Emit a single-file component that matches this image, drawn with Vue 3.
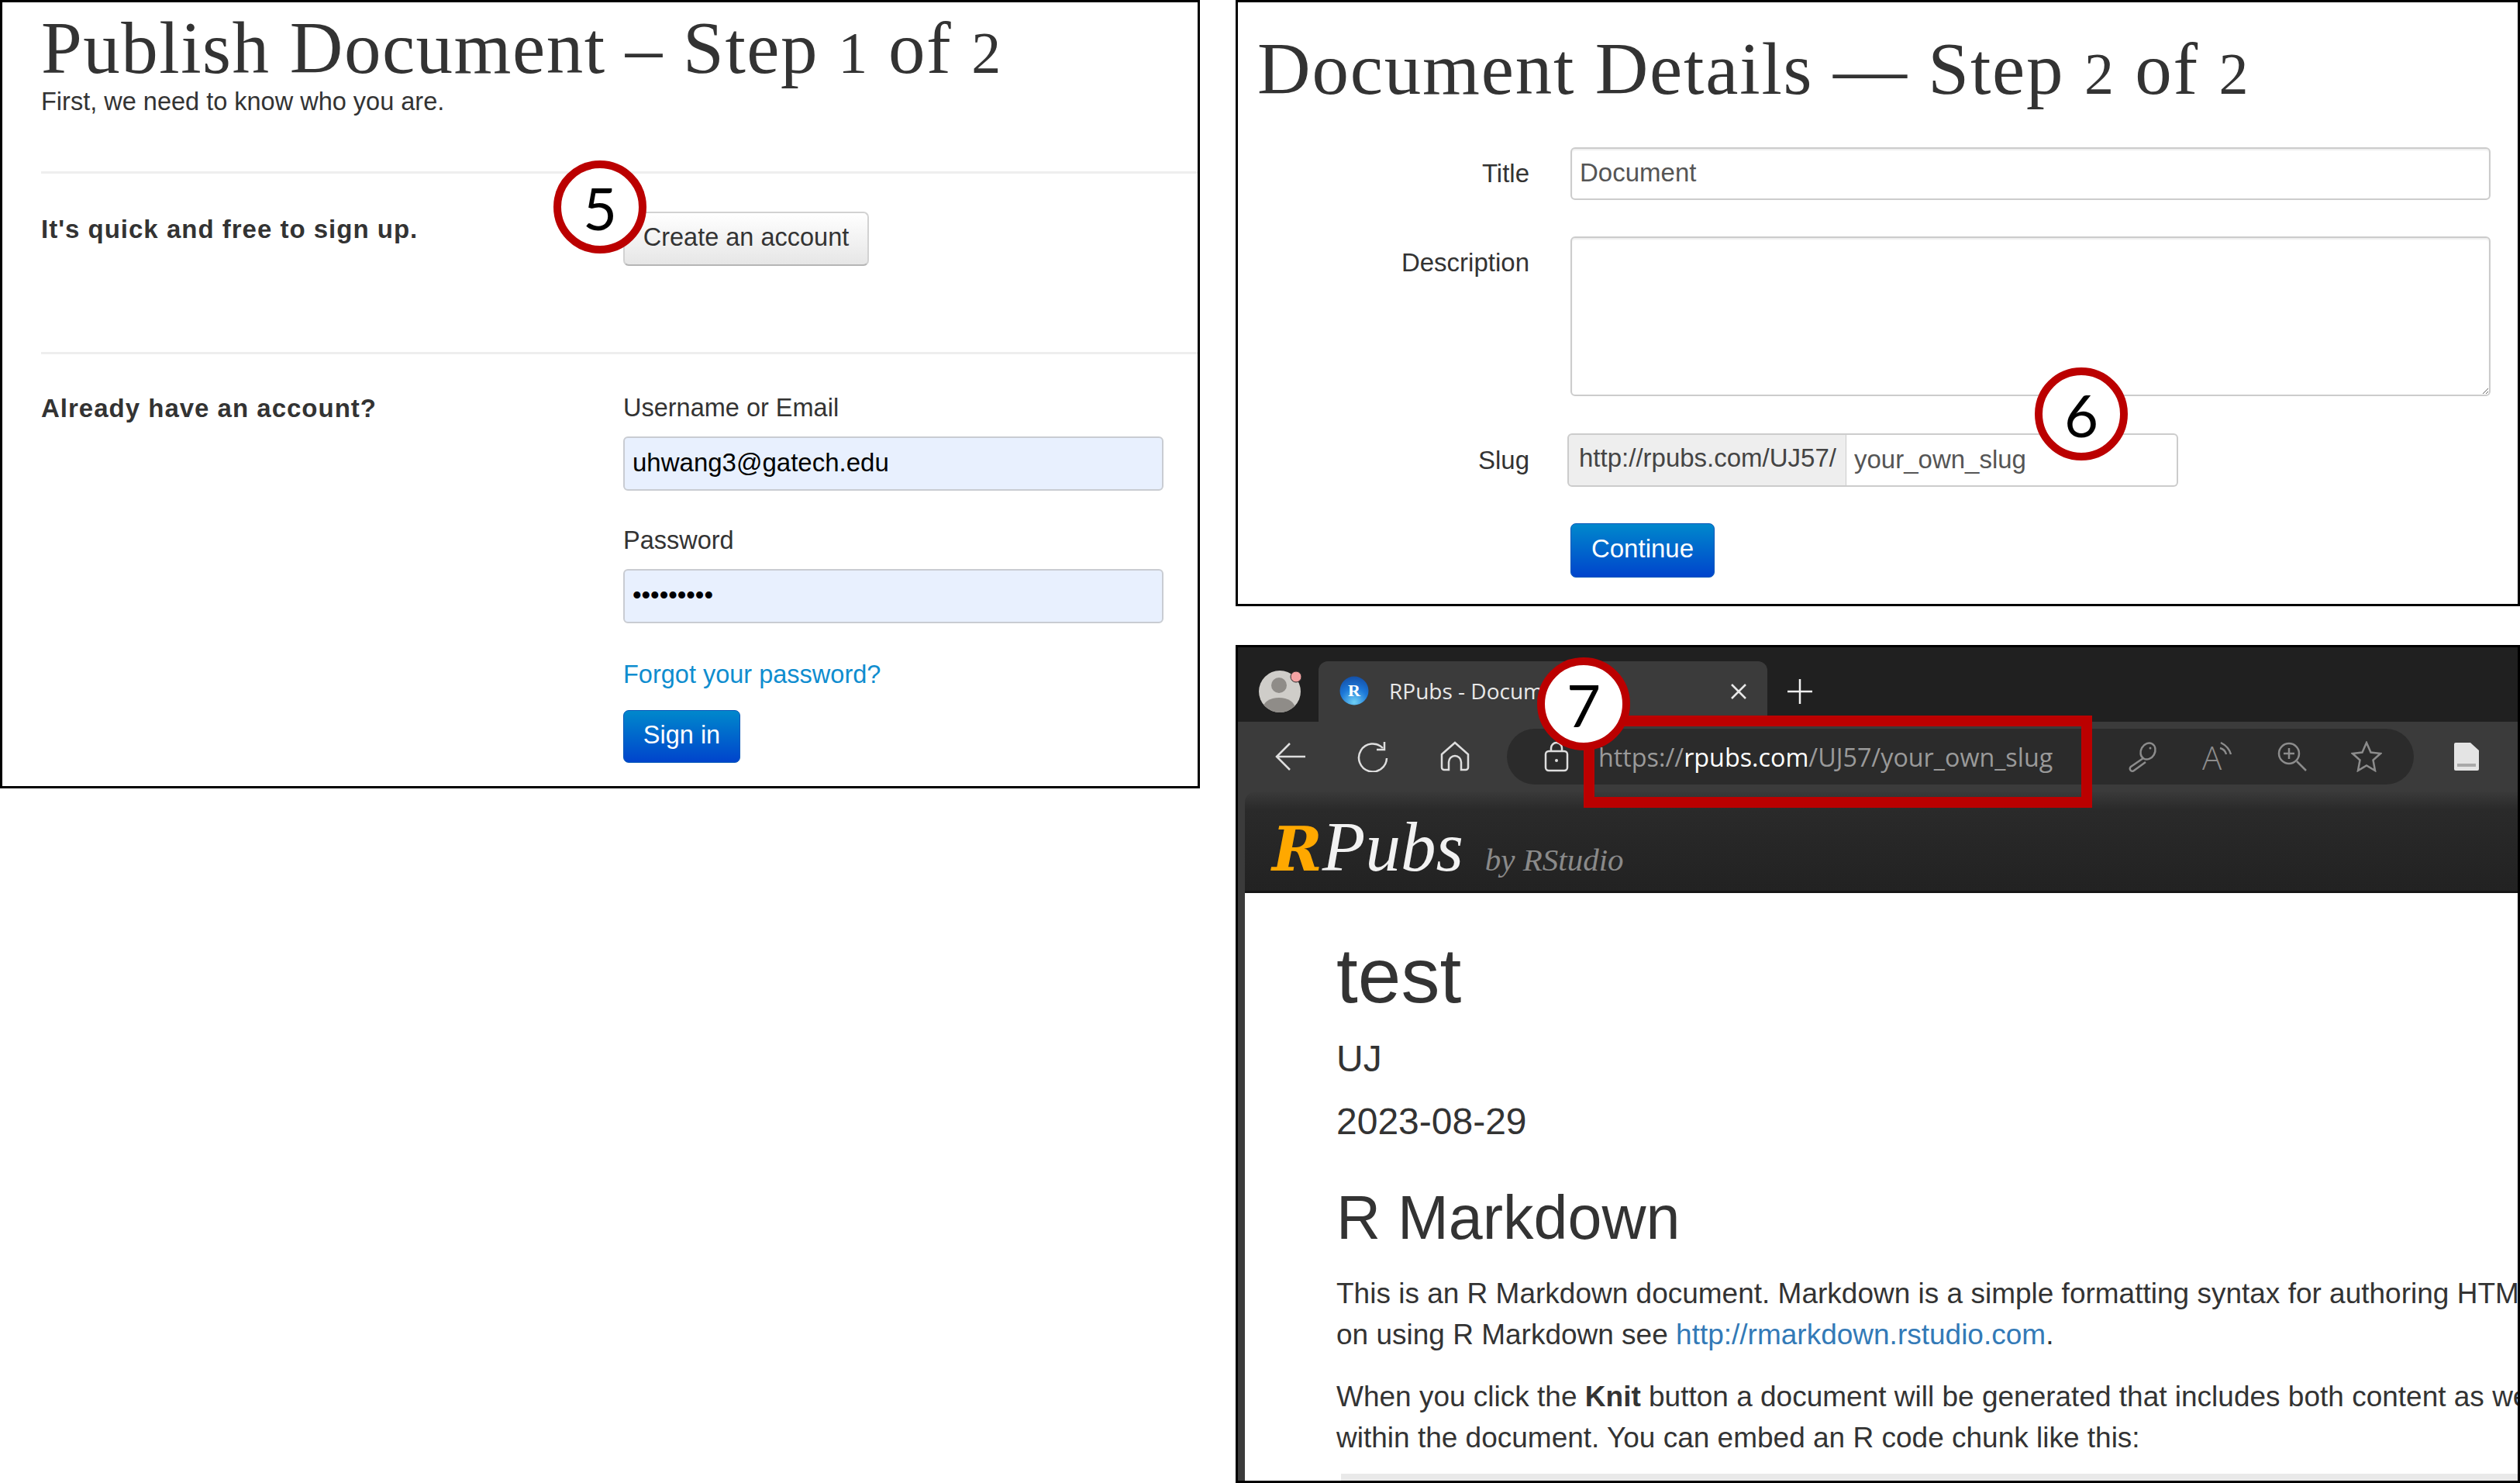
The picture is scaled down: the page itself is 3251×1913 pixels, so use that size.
<script setup>
import { reactive } from 'vue'

const login = reactive({ email: 'uhwang3@gatech.edu', password: 'secret123' })
const details = reactive({ title: 'Document', description: '', slug: 'your_own_slug' })
</script>

<template>
  <div class="sheet">
    <section class="panel publish">
      <h1 class="slab">Publish Document – Step <span class="num">1</span> of <span class="num">2</span></h1>
      <p class="lead">First, we need to know who you are.</p>

      <div class="row signup">
        <strong>It's quick and free to sign up.</strong>
        <div><button class="btn">Create an account</button></div>
      </div>

      <div class="row signin">
        <strong>Already have an account?</strong>
        <form class="login" @submit.prevent>
          <label for="email">Username or Email</label>
          <input id="email" v-model="login.email" class="filled" type="text" />
          <label for="pass" class="pass-label">Password</label>
          <input id="pass" v-model="login.password" class="filled pass" type="password" />
          <a class="forgot" href="#">Forgot your password?</a>
          <button class="btn primary">Sign in</button>
        </form>
      </div>
    </section>

    <div class="right">
      <section class="panel details">
        <h1 class="slab">Document Details — Step <span class="num">2</span> of <span class="num">2</span></h1>
        <form class="fields" @submit.prevent>
          <label for="title">Title</label>
          <input id="title" v-model="details.title" class="plain" type="text" />

          <label for="desc" class="desc-label">Description</label>
          <textarea id="desc" v-model="details.description" class="plain area"></textarea>

          <label for="slug">Slug</label>
          <div class="slug-group">
            <span class="addon">http://rpubs.com/UJ57/</span>
            <input id="slug" v-model="details.slug" class="slug" type="text" />
          </div>

          <span></span>
          <div><button class="btn primary continue">Continue</button></div>
        </form>
      </section>

      <section class="panel browser">
        <div class="tabstrip">
          <svg class="avatar" viewBox="0 0 56 56">
            <clipPath id="avatar-clip"><circle cx="28" cy="28" r="27" /></clipPath>
            <circle cx="28" cy="28" r="27" fill="#cfcdc9" />
            <g clip-path="url(#avatar-clip)" fill="#8f8c88">
              <circle cx="27" cy="20" r="10" />
              <ellipse cx="27" cy="50" rx="21" ry="14" />
            </g>
            <circle cx="49" cy="9" r="7" fill="#f4a3a3" stroke="#2a2a2a" stroke-width="1" />
          </svg>
          <div class="tab">
            <svg class="favicon" viewBox="0 0 38 38">
              <defs>
                <radialGradient id="fav" cx="50%" cy="90%" r="90%">
                  <stop offset="0" stop-color="#6fd0f5" />
                  <stop offset="0.55" stop-color="#1c78d8" />
                  <stop offset="1" stop-color="#1450a8" />
                </radialGradient>
              </defs>
              <circle cx="19" cy="19" r="18.5" fill="url(#fav)" />
              <text x="19" y="26" text-anchor="middle" class="fav-r">R</text>
            </svg>
            <span class="tab-title">RPubs - Document</span>
            <svg class="tab-close" viewBox="0 0 24 24">
              <path d="M3 3l18 18M21 3L3 21" />
            </svg>
          </div>
          <svg class="new-tab" viewBox="0 0 34 34"><path d="M17 1v32M1 17h32" /></svg>
        </div>

        <div class="toolbar">
          <svg class="tool" viewBox="0 0 40 40"><path d="M39 20H2M19 3L2 20l17 17" /></svg>
          <svg class="tool" viewBox="0 0 40 40">
            <path d="M33 9A18 18 0 1 0 38 22" />
            <path d="M35 1v10H25" />
          </svg>
          <svg class="tool" viewBox="0 0 40 40">
            <path d="M3 17L20 2l17 15v17a3 3 0 0 1-3 3h-6V27a8 8 0 0 0-16 0v10H6a3 3 0 0 1-3-3Z" />
          </svg>
          <div class="omnibox">
            <svg class="tool lock" viewBox="0 0 40 40">
              <rect x="6" y="13" width="28" height="25" rx="4" />
              <path d="M13 13V9a7 7 0 0 1 14 0v4" />
              <circle class="dot" cx="20" cy="25" r="2" />
            </svg>
            <span class="url"><span class="dim">https://</span>rpubs.com<span class="dim">/UJ57/your_own_slug</span></span>
            <svg class="tool muted push" viewBox="0 0 40 40">
              <ellipse cx="26" cy="13" rx="9" ry="11" transform="rotate(30 26 13)" />
              <circle class="dot" cx="29" cy="9" r="1.5" />
              <path d="M20 22L4 33a3 3 0 0 0 4 5l15-11" />
            </svg>
            <svg class="tool muted" viewBox="0 0 40 40">
              <text x="0" y="37" class="read-a">A</text>
              <path d="M24 2c6 3 11 8 13 15M23 9c4 1 7 4 8 8" />
            </svg>
            <svg class="tool muted" viewBox="0 0 40 40">
              <circle cx="16" cy="16" r="13" />
              <path d="M16 9v14M9 16h14M26 26l12 12" />
            </svg>
            <svg class="tool muted" viewBox="0 0 40 40">
              <path d="M20 2l5.5 12.5L38 16l-9.5 8.5L31 38l-11-6.500L9 38l2.500-13.500L2 16l12.500-1.500Z" />
            </svg>
          </div>
          <svg class="doc-icon" viewBox="0 0 34 38">
            <path d="M1 3a2 2 0 0 1 2-2h19l11 10v24a2 2 0 0 1-2 2H3a2 2 0 0 1-2-2Z" fill="#e4e4e4" />
            <rect x="5" y="28" width="24" height="4" fill="#a9a9a9" />
          </svg>
        </div>

        <div class="site">
          <header class="site-bar">
            <span class="brand"><b>R</b>Pubs</span>
            <span class="by">by RStudio</span>
          </header>
          <article class="doc">
            <h1>test</h1>
            <h4 class="author">UJ</h4>
            <h4 class="date">2023-08-29</h4>
            <h2>R Markdown</h2>
            <p>This is an R Markdown document. Markdown is a simple formatting syntax for authoring HTML, PDF,
              <br />on using R Markdown see <a href="#">http://rmarkdown.rstudio.com</a>.</p>
            <p class="last">When you click the <b>Knit</b> button a document will be generated that includes both content as well as
              <br />within the document. You can embed an R code chunk like this:</p>
            <div class="code"></div>
          </article>
        </div>
      </section>
    </div>

    <!-- callouts drawn on top of the screenshots -->
    <div class="callout c5">5</div>
    <div class="callout c6">6</div>
    <div class="url-box"></div>
    <div class="callout c7">7</div>
  </div>
</template>

<style>
html,
body {
  margin: 0;
  background: #fff;
  overflow: hidden;
}
</style>

<style scoped>
.sheet {
  position: relative;
  display: grid;
  grid-template-columns: 1548px 1657px;
  column-gap: 46px;
  align-items: start;
  width: 3251px;
  height: 1913px;
  background: #fff;
  color: #333;
  font-family: "Liberation Sans", Arial, sans-serif;
  font-size: 32.5px;
}

.panel {
  box-sizing: border-box;
  border: 3px solid #000;
  overflow: hidden;
}

.slab {
  margin: 0;
  font-family: "Liberation Serif", serif;
  font-weight: 400;
  font-size: 95px;
  line-height: 96px;
  letter-spacing: 1.5px;
  color: #333;
  white-space: nowrap;
}

.slab .num {
  font-size: 76px;
}

/* left: publish step 1 */
.publish {
  height: 1017px;
  padding-left: 50px;
}

.publish .slab {
  margin-top: 11px;
}

.lead {
  margin: -2px 0 0;
  line-height: 34px;
}

.row {
  display: grid;
  grid-template-columns: 751px 697px;
  border-top: 3px solid #eee;
}

.row strong {
  line-height: 42px;
  font-size: 33px;
  letter-spacing: 1px;
}

.signup {
  margin-top: 73px;
  height: 233px;
  padding-top: 49px;
  box-sizing: border-box;
}

.signup strong {
  padding-top: 2px;
}

.signin {
  padding-top: 49px;
}

.login {
  display: flex;
  flex-direction: column;
  align-items: flex-start;
}

.login label {
  line-height: 40px;
  margin-bottom: 17px;
}

.login .pass-label {
  margin-top: 44px;
  margin-bottom: 17px;
}

.filled {
  box-sizing: border-box;
  width: 697px;
  height: 70px;
  padding: 0 10px 2px;
  border: 2px solid #c9ccd2;
  border-radius: 6px;
  background: #e8f0fe;
  color: #000;
  font: 33px "Liberation Sans", Arial, sans-serif;
  outline: none;
}

.forgot {
  margin-top: 46px;
  color: #0f8dcf;
  line-height: 40px;
  text-decoration: none;
}

.btn {
  box-sizing: border-box;
  width: 317px;
  height: 70px;
  padding: 0 0 4px;
  border: 2px solid #d2d2d2;
  border-bottom-color: #b5b5b5;
  border-radius: 7px;
  background: linear-gradient(#ffffff, #e6e6e6);
  color: #333;
  font: 32.5px "Liberation Sans", Arial, sans-serif;
}

.btn.primary {
  border: 1px solid #0055b8;
  background: linear-gradient(#0088cc, #0044cc);
  color: #fff;
}

.login .primary {
  margin-top: 26px;
  width: 151px;
  height: 68px;
}

/* right: details step 2 */
.right {
  display: flex;
  flex-direction: column;
  gap: 50px;
}

.details {
  height: 782px;
  font-size: 33px;
}

.details .slab {
  margin: 38px 0 0 25px;
  letter-spacing: 1.8px;
}

.fields {
  display: grid;
  grid-template-columns: 376px 1187px;
  column-gap: 53px;
  margin-top: 47px;
}

.fields label {
  justify-self: end;
  line-height: 40px;
  align-self: center;
}

.fields .desc-label {
  align-self: start;
  padding-top: 61px;
}

.plain {
  box-sizing: border-box;
  width: 100%;
  height: 68px;
  padding: 0 10px 2px;
  border: 2px solid #ccc;
  border-radius: 6px;
  background: #fff;
  color: #555;
  font: 33px "Liberation Sans", Arial, sans-serif;
  box-shadow: inset 0 2px 2px rgba(0, 0, 0, 0.07);
  outline: none;
}

.area {
  display: block;
  height: 206px;
  margin: 47px 0 48px;
  padding: 8px 10px;
}

.slug-group {
  display: flex;
  margin-left: -4px;
  height: 69px;
}

.addon {
  box-sizing: border-box;
  width: 360px;
  padding-left: 13px;
  border: 2px solid #ccc;
  border-right-width: 1px;
  border-radius: 6px 0 0 6px;
  background: #eee;
  color: #444;
  line-height: 60px;
  white-space: nowrap;
  overflow: hidden;
}

.slug {
  box-sizing: border-box;
  width: 428px;
  padding: 0 10px 2px;
  border: 2px solid #ccc;
  border-left: 0;
  border-radius: 0 6px 6px 0;
  color: #555;
  font: 33px "Liberation Sans", Arial, sans-serif;
  outline: none;
}

.continue {
  margin-top: 47px;
  width: 186px;
  height: 70px;
  font-size: 33px;
}

/* right: browser shot */
.browser {
  display: flex;
  flex-direction: column;
  height: 1081px;
  background: #3b3b3b;
}

.tabstrip {
  display: flex;
  align-items: flex-end;
  flex: none;
  height: 96px;
  background: #202020;
}

.avatar {
  flex: none;
  width: 56px;
  height: 56px;
  margin: 0 22px 11px 26px;
}

.tab {
  display: flex;
  align-items: center;
  box-sizing: border-box;
  width: 579px;
  height: 78px;
  padding: 0 25px 0 27px;
  background: #3b3b3b;
  border-radius: 12px 12px 0 0;
}

.favicon {
  flex: none;
  width: 38px;
  height: 38px;
  margin-bottom: 2px;
}

.fav-r {
  font: 700 22px "Liberation Serif", serif;
  fill: #fff;
}

.tab-title {
  flex: 1;
  margin: 0 0 2px 26px;
  color: #e8e8e8;
  font: 28px "Open Sans", sans-serif;
  white-space: nowrap;
  overflow: hidden;
}

.tab-close {
  flex: none;
  width: 24px;
  height: 24px;
  fill: none;
  stroke: #e8e8e8;
  stroke-width: 2.5;
}

.new-tab {
  flex: none;
  width: 34px;
  height: 34px;
  margin: 0 0 22px 25px;
  fill: none;
  stroke: #f0f0f0;
  stroke-width: 2.5;
}

.toolbar {
  display: flex;
  align-items: center;
  flex: none;
  gap: 66px;
  height: 90px;
  padding-left: 48px;
}

.tool {
  flex: none;
  width: 40px;
  height: 40px;
  fill: none;
  stroke: #dedede;
  stroke-width: 2.5;
}

.tool .dot {
  fill: #dedede;
  stroke: none;
}

.muted {
  stroke: #8c8c8c;
}

.muted .dot {
  fill: #8c8c8c;
}

.read-a {
  font: 300 42px "Open Sans", sans-serif;
  fill: #8c8c8c;
  stroke: none;
}

.omnibox {
  display: flex;
  align-items: center;
  flex: none;
  box-sizing: border-box;
  width: 1170px;
  height: 72px;
  margin-left: -19px;
  padding: 0 41px 0 44px;
  border-radius: 36px;
  background: #2b2b2b;
  gap: 56px;
}

.url {
  margin-left: -22px;
  color: #fff;
  font: 32.3px "Open Sans", sans-serif;
  white-space: nowrap;
}

.dim {
  color: #9a9a9a;
}

.push {
  margin-left: auto;
}

.doc-icon {
  flex: none;
  width: 34px;
  height: 38px;
  margin-left: -15px;
}

.site {
  flex: 1;
  display: flex;
  flex-direction: column;
  min-height: 0;
  margin-left: 9px;
}

.site-bar {
  display: flex;
  align-items: baseline;
  flex: none;
  gap: 28px;
  box-sizing: border-box;
  height: 131px;
  padding: 22px 0 0 35px;
  border-bottom: 3px solid #151515;
  border-radius: 14px 0 0 0;
  background: linear-gradient(#3a3a3a, #2a2a2a 18%, #222);
}

.brand {
  color: #f2f2f2;
  font: italic 400 91px/100px "Liberation Serif", serif;
}

.brand b {
  color: #ffa800;
  font-family: "DejaVu Serif", serif;
  font-size: 78px;
}

.by {
  color: #8a8a8a;
  font: italic 400 41px "Liberation Serif", serif;
}

.doc {
  flex: 1;
  min-height: 0;
  padding: 0 0 0 118px;
  background: #fff;
  color: #333;
  font-size: 37px;
  line-height: 53px;
  white-space: nowrap;
  overflow: hidden;
}

.doc h1 {
  margin: 51px 0 0;
  font-weight: 400;
  font-size: 100px;
  line-height: 110px;
}

.doc h4 {
  margin: 0;
  font-weight: 400;
  font-size: 48px;
  line-height: 56px;
}

.doc .author {
  margin-top: 25px;
}

.doc .date {
  margin-top: 25px;
}

.doc h2 {
  margin: 51px 0 0;
  font-weight: 400;
  font-size: 79px;
  line-height: 90px;
}

.doc p {
  margin: 0 0 27px;
}

.doc h2 + p {
  margin-top: 26px;
}

.doc p.last {
  margin-bottom: 20px;
}

.doc a {
  color: #337ab7;
  text-decoration: none;
}

.code {
  height: 20px;
  margin-left: 6px;
  background: #e9e9e9;
}

/* callouts */
.callout {
  position: absolute;
  box-sizing: border-box;
  display: flex;
  align-items: center;
  justify-content: center;
  width: 120px;
  height: 120px;
  border: 10px solid #bb0000;
  border-radius: 50%;
  background: #fff;
  color: #000;
  font: 76px "Lato", sans-serif;
}

.c5 {
  left: 714px;
  top: 207px;
}

.c6 {
  left: 2625px;
  top: 474px;
}

.c7 {
  left: 1983px;
  top: 848px;
}

.url-box {
  position: absolute;
  left: 2043px;
  top: 923px;
  box-sizing: border-box;
  width: 656px;
  height: 119px;
  border: 14px solid #bb0000;
}
</style>
